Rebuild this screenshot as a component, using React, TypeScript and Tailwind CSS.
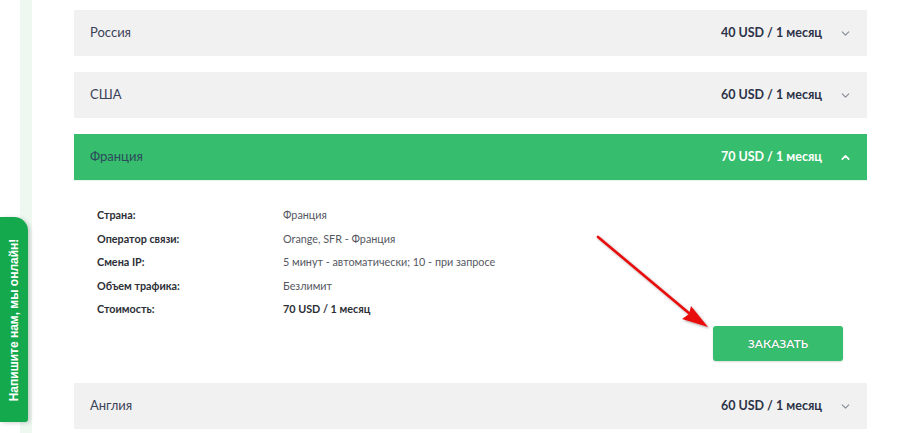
import { ChevronDown, ChevronUp } from "lucide-react";

type Country = { name: string; price: string; open?: boolean };

const COUNTRIES: Country[] = [
  { name: "Россия", price: "40 USD / 1 месяц" },
  { name: "США", price: "60 USD / 1 месяц" },
  { name: "Франция", price: "70 USD / 1 месяц", open: true },
  { name: "Англия", price: "60 USD / 1 месяц" },
];

const DETAILS: [string, string, boolean?][] = [
  ["Страна:", "Франция"],
  ["Оператор связи:", "Orange, SFR - Франция"],
  ["Смена IP:", "5 минут - автоматически; 10 - при запросе"],
  ["Объем трафика:", "Безлимит"],
  ["Стоимость:", "70 USD / 1 месяц", true],
];

function Row({ c }: { c: Country }) {
  const Chevron = c.open ? ChevronUp : ChevronDown;
  return (
    <div
      className={[
        "flex h-[46px] items-center pl-4 pr-[15px]",
        c.open ? "bg-[#36bd6d]" : "bg-[#f1f1f1]",
      ].join(" ")}
    >
      <span
        className={`flex-1 text-[13px] ${
          c.open ? "text-[#2c4a5c]" : "text-[#3b4258]"
        }`}
      >
        {c.name}
      </span>
      <span
        className={`text-[12.5px] font-bold ${
          c.open ? "text-white" : "text-[#2b3248]"
        }`}
      >
        {c.price}
      </span>
      <Chevron
        className={`ml-[17px] h-[13px] w-[13px] ${
          c.open ? "text-white" : "text-[#8a8f9c]"
        }`}
        strokeWidth={c.open ? 3 : 2.2}
      />
    </div>
  );
}

function Details() {
  return (
    <div className="relative flex h-[195px] flex-col border-t border-[#e4f4ea] pl-[23px] pr-6 pt-[26px]">
      <div className="grid grid-cols-[186px_1fr] gap-y-[8.5px] text-[10.8px] leading-[15px]">
        {DETAILS.map(([k, v, b]) => (
          <div key={k} className="contents">
            <span className="font-bold text-[#2d2f36]">{k}</span>
            <span className={b ? "font-bold text-[#2d2f36]" : "text-[#55585f]"}>
              {v}
            </span>
          </div>
        ))}
      </div>
      <div className="mt-[10px] flex justify-end">
        <button className="h-[35px] w-[130px] rounded-[3px] bg-[#36bd6d] text-[12px] font-semibold text-white shadow-[0_1px_2px_rgba(0,0,0,0.15)] [text-shadow:0_0_1px_rgba(0,0,0,0.35)]">
          ЗАКАЗАТЬ
        </button>
      </div>
    </div>
  );
}

function Arrow() {
  return (
    <svg
      className="pointer-events-none absolute left-[590px] top-[230px]"
      width="130"
      height="108"
      viewBox="0 0 130 108"
    >
      <defs>
        <filter id="sh" x="-20%" y="-20%" width="140%" height="140%">
          <feDropShadow dx="1.5" dy="1.5" stdDeviation="1.2" floodColor="#000" floodOpacity="0.35" />
        </filter>
      </defs>
      <g filter="url(#sh)">
        <line x1="8" y1="7" x2="106" y2="89" stroke="#e8110f" strokeWidth="2.6" strokeLinecap="round" />
        <path d="M118 97 L92 89 L99 84 L101 76 Z" fill="#e8110f" />
      </g>
    </svg>
  );
}

export default function App() {
  return (
    <div className="relative h-[433px] w-[900px] overflow-hidden bg-white font-['Lato','Noto_Sans',sans-serif]">
      <div className="flex h-full">
        <div className="w-5 shrink-0" />
        <div className="w-3 shrink-0 bg-[#eef8f1]" />
        <div className="ml-[42px] flex w-[793px] flex-col gap-4 pt-[10px]">
          <Row c={COUNTRIES[0]} />
          <Row c={COUNTRIES[1]} />
          <div className="-mb-2 flex flex-col">
            <Row c={COUNTRIES[2]} />
            <Details />
          </div>
          <Row c={COUNTRIES[3]} />
        </div>
      </div>

      {/* chat tab */}
      <div className="absolute left-0 top-[217px] flex h-[205px] w-[28px] items-center justify-center rounded-tr-[14px] rounded-br-[3px] bg-[#14a94d] shadow-[2px_1px_4px_rgba(0,0,0,0.18)]">
        <span className="-rotate-90 whitespace-nowrap font-['Liberation_Sans',Arial,sans-serif] text-[12px] font-bold text-white">
          Напишите нам, мы онлайн!
        </span>
      </div>

      <Arrow />
    </div>
  );
}
